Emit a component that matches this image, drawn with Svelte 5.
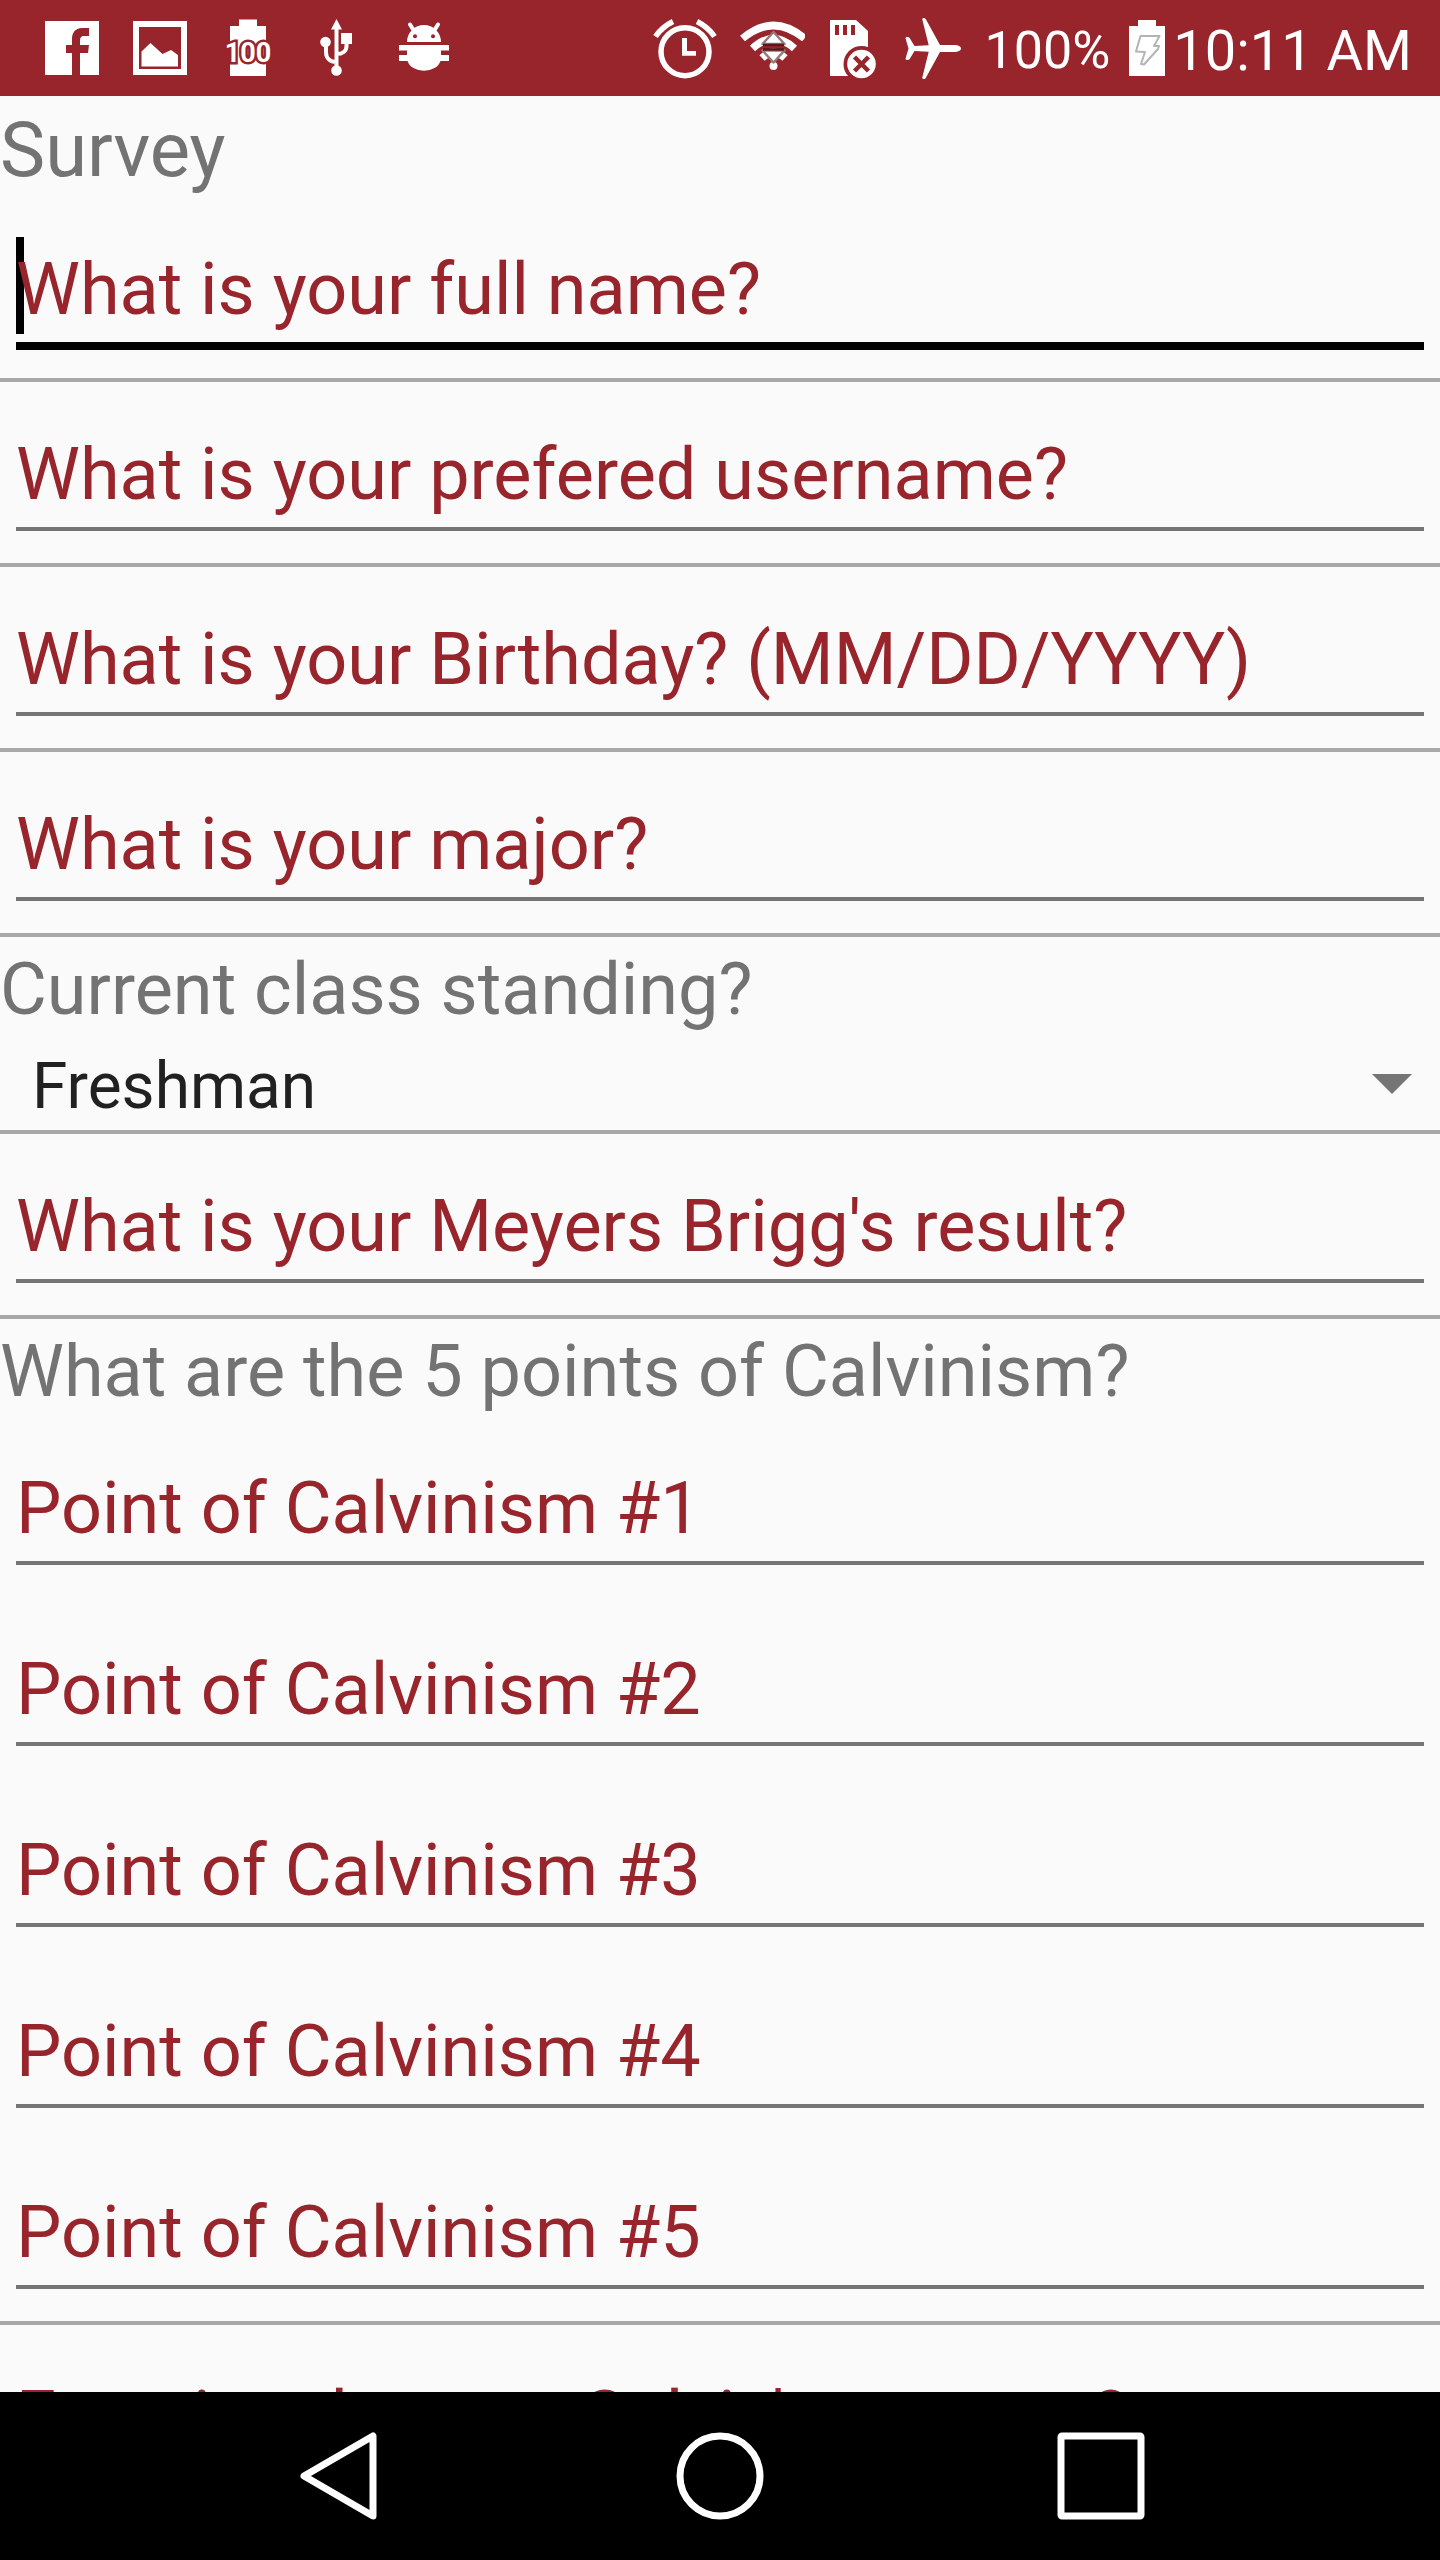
<script>
  const profile = [
    { id: 'fullname', label: 'What is your full name?', active: true },
    { id: 'username', label: 'What is your prefered username?' },
    { id: 'birthday', label: 'What is your Birthday? (MM/DD/YYYY)' },
    { id: 'major', label: 'What is your major?' }
  ];
  const points = [1, 2, 3, 4, 5].map((n) => ({ id: `point${n}`, label: `Point of Calvinism #${n}` }));
  const standings = ['Freshman', 'Sophomore', 'Junior', 'Senior'];
  let standing = $state('Freshman');
</script>

{#snippet field(f)}
  <div class="field" class:active={f.active}>
    {#if f.active}<span class="caret"></span>{/if}
    <input id={f.id} type="text" placeholder={f.label} aria-label={f.label} />
  </div>
{/snippet}

<div class="screen">
  <header class="status">
    <div class="group notes">
      <svg viewBox="36 0 72 96" class="icon" aria-hidden="true">
        <path d="M45 21h54v54H80V53h8l1-8h-9v-4c0-3 1-5 4-5h5v-8h-7c-7 0-10 5-10 11v6h-6v8h6v22H45z" />
      </svg>
      <svg viewBox="124 0 72 96" class="icon" aria-hidden="true">
        <path fill-rule="evenodd" d="M133 21h54v54h-54zM139 27v42h42V27z" />
        <path d="M141.500 51.500l9-8.500 12 11 8.500-4 7 5v11.500h-36.500z" />
      </svg>
      <svg viewBox="212 0 72 96" class="icon" aria-hidden="true">
        <path d="M239 19.500h18V26h9v50h-36V26h9z" />
        <text x="248" y="62" class="level">100</text>
      </svg>
      <svg viewBox="300 0 72 96" class="icon" aria-hidden="true">
        <path d="M336.500 19l5.500 10.500h-11zM341 33h11v11h-11z" />
        <circle cx="336.500" cy="70.500" r="5.300" />
        <circle cx="325.500" cy="42" r="5.300" />
        <path class="line" d="M336.500 28v40M326 44v8c0 6 4 10 10.500 10M346.500 43v3c0 5-4 8-10 8" />
      </svg>
      <svg viewBox="388 0 72 96" class="icon" aria-hidden="true">
        <path d="M407 42a17 17 0 0 1 34 0z" />
        <path class="line round" d="M410 24.500l5 8M438 24.500l-5 8" />
        <circle class="cut" cx="415" cy="36.300" r="2" />
        <circle class="cut" cx="433" cy="36.300" r="2" />
        <path d="M399 45h50v5.500h-8V55h8v6h-8.500a17 13 0 0 1-33 0H399v-6h8v-4.500h-8z" />
      </svg>
    </div>
    <div class="group">
      <svg viewBox="646 0 76 96" class="icon wide" aria-hidden="true">
        <circle class="line thick" cx="686" cy="51.700" r="24" />
        <path d="M683 38h5v13h9v4.700h-14z" />
        <path class="line thick" d="M656.500 36.500Q663 27 674 21.500M715.500 36.500Q709 27 698 21.500" />
      </svg>
      <svg viewBox="730 0 76 96" class="icon wide" aria-hidden="true">
        <path class="arc" d="M743.500 38.500Q774.500 12.500 805.500 38.500M753.500 48.500Q774.500 29 795.500 48.500M763 58Q774.500 47 786 58" />
        <circle cx="774.500" cy="66" r="4" />
        <path class="traffic" d="M774.500 32l11 12h-22zM774.500 62.500l11-12h-22z" />
        <path class="shade" d="M764 45h21M764 49.500h21" />
      </svg>
      <svg viewBox="814 0 76 96" class="icon wide" aria-hidden="true">
        <path d="M831 20h26l12 11v45h-38z" />
        <path class="cut" d="M836 25h4v10h-4zM844 25h4v10h-4zM852 25h4v10h-4z" />
        <circle class="cut" cx="862.500" cy="64" r="18" />
        <circle cx="862.500" cy="64" r="14.300" />
        <path class="cross" d="M855.500 57l14 14M869.500 57l-14 14" />
      </svg>
      <svg viewBox="898 0 76 96" class="icon wide" aria-hidden="true">
        <path d="M962 48.500c0-2-3-3.500-7-3.500h-14L927 19.500c-1-2-4-2-3.700 0l6.400 25.700-14.200.8-5-8.300c-1-1-4-1-4 .5l3 10.300-3 10.300c0 1.500 3 1.500 4 .5l5-8.300 14.200.8-6.400 25.700c-.3 2 2.700 2 3.700 0L941 52h14c4 0 7-1.500 7-3.500z" />
      </svg>
      <span class="reading percent">100%</span>
      <svg viewBox="1121 0 44 96" class="icon slim" aria-hidden="true">
        <path d="M1138 20h18v6h9v50h-36V26h9z" />
        <path class="bolt" d="M1140.500 36h19l-5.500 10h5l-1 3-14 15.500-3-.5 4-12-9-.5z" />
      </svg>
      <time class="reading">10:11 AM</time>
    </div>
  </header>

  <main>
    <form>
      <h1>Survey</h1>
      {#each profile as f (f.id)}
        {@render field(f)}
        <hr />
      {/each}

      <label class="question" for="standing">Current class standing?</label>
      <div class="spinner">
        <select id="standing" bind:value={standing}>
          {#each standings as s}
            <option>{s}</option>
          {/each}
        </select>
        <svg viewBox="0 0 40 20" class="arrow" aria-hidden="true"><path d="M0 0h40L20 20z" /></svg>
      </div>
      <hr />

      {@render field({ id: 'briggs', label: "What is your Meyers Brigg's result?" })}
      <hr />

      <p class="question">What are the 5 points of Calvinism?</p>
      {#each points as f (f.id)}
        {@render field(f)}
      {/each}
      <hr />

      {@render field({ id: 'place', label: "Favorite place on Calvin's campus?" })}
    </form>
  </main>

  <nav>
    <button type="button" aria-label="Back">
      <svg viewBox="0 0 96 96" aria-hidden="true"><path d="M82 8v80L13 48z" /></svg>
    </button>
    <button type="button" aria-label="Home">
      <svg viewBox="0 0 96 96" aria-hidden="true"><circle cx="48" cy="48" r="40" /></svg>
    </button>
    <button type="button" aria-label="Recent apps">
      <svg viewBox="0 0 96 96" aria-hidden="true"><rect x="8" y="8" width="80" height="80" rx="1" /></svg>
    </button>
  </nav>
</div>

<style>
  :global(body) {
    margin: 0;
    background: #fafafa;
  }

  .screen {
    display: flex;
    flex-direction: column;
    height: 100vh;
    background: #fafafa;
    color: #737373;
    font-family: Roboto, 'Noto Sans', sans-serif;
    font-size: 72px;
  }

  .status {
    flex: none;
    display: flex;
    justify-content: space-between;
    height: 96px;
    padding: 0 28px 0 36px;
    background: #97252b;
    color: #fff;
  }

  .group {
    display: flex;
    align-items: center;
    gap: 8px;
  }

  .notes {
    gap: 16px;
  }

  .icon {
    flex: none;
    width: 72px;
    height: 96px;
    fill: #fff;
  }

  .wide {
    width: 76px;
  }

  .slim {
    width: 44px;
  }

  .icon .cut {
    fill: #97252b;
  }

  .icon .line {
    fill: none;
    stroke: #fff;
    stroke-width: 4;
  }

  .icon .round {
    stroke-linecap: round;
  }

  .icon .thick {
    stroke-width: 5.5;
  }

  .arc {
    fill: none;
    stroke: #fff;
    stroke-width: 7.5;
  }

  .traffic {
    stroke: #97797b;
    stroke-width: 2.5;
    stroke-linejoin: round;
  }

  .shade {
    stroke: #5c171b;
    stroke-width: 2.5;
  }

  .cross {
    stroke: #97252b;
    stroke-width: 4.5;
  }

  .bolt {
    fill: none;
    stroke: #b4b4b4;
    stroke-width: 2;
    stroke-linejoin: round;
  }

  .level {
    font: bold 27px Roboto, sans-serif;
    text-anchor: middle;
    stroke: #97252b;
    stroke-width: 5;
    paint-order: stroke;
  }

  .reading {
    padding-top: 6px;
    font-size: 56px;
    line-height: 90px;
  }

  .percent {
    margin: 0 3px;
    font-size: 52px;
  }

  main {
    flex: 1;
    min-height: 0;
    overflow-y: auto;
    scrollbar-width: none;
  }

  h1 {
    margin: 0;
    padding-top: 8px;
    font-size: 76px;
    font-weight: 400;
    line-height: 93px;
  }

  .question {
    display: block;
    margin: 0;
    padding-top: 8px;
    line-height: 89px;
  }

  hr {
    height: 4px;
    margin: 0;
    border: 0;
    background: #a8a8a8;
  }

  .field {
    position: relative;
    height: 133px;
    padding: 48px 16px 0;
  }

  .field input {
    position: relative;
    display: block;
    box-sizing: border-box;
    width: 100%;
    height: 101px;
    margin: 0;
    padding: 0 0 8px;
    border: 0;
    border-bottom: 4px solid #757575;
    border-radius: 0;
    outline: none;
    background: transparent;
    color: #212121;
    font: inherit;
    line-height: 89px;
  }

  .field input::placeholder {
    color: #97252b;
    opacity: 1;
  }

  .active input {
    height: 105px;
    border-bottom: 8px solid #000;
  }

  .caret {
    position: absolute;
    top: 40px;
    left: 16px;
    width: 8px;
    height: 97px;
    background: #000;
  }

  .spinner {
    display: grid;
    align-items: center;
  }

  .spinner select {
    grid-area: 1 / 1;
    appearance: none;
    box-sizing: border-box;
    width: 100%;
    height: 96px;
    margin: 0;
    padding: 8px 96px 0 32px;
    border: 0;
    border-radius: 0;
    background: transparent;
    color: #212121;
    font: inherit;
    font-size: 64px;
  }

  .arrow {
    grid-area: 1 / 1;
    justify-self: end;
    width: 40px;
    height: 20px;
    margin: 4px 28px 0 0;
    fill: #757575;
    pointer-events: none;
  }

  nav {
    flex: none;
    display: flex;
    justify-content: space-between;
    height: 168px;
    padding: 0 148px;
    background: #000;
  }

  nav button {
    flex: 1;
    display: flex;
    align-items: center;
    justify-content: center;
    padding: 0;
    border: 0;
    background: transparent;
  }

  nav svg {
    width: 96px;
    height: 96px;
    fill: none;
    stroke: #fff;
    stroke-width: 7;
    stroke-linejoin: round;
  }
</style>
